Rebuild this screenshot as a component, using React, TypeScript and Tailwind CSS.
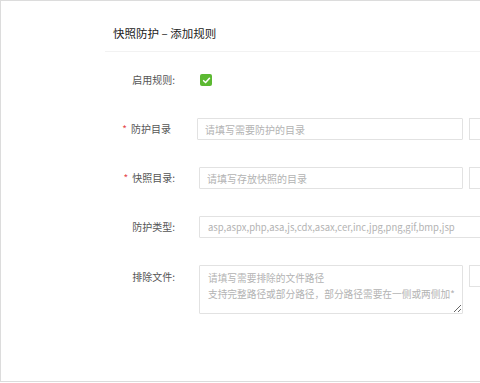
import React from 'react';

const font = "font-['Noto_Sans_CJK_SC','Noto_Sans',sans-serif]";

const Label = ({ text, required, colon = true }: { text: string; required?: boolean; colon?: boolean }) => (
  <div className={`w-[70px] shrink-0 text-right text-[10px] leading-[14px] text-[#555] ${colon ? '' : 'pr-[4px]'}`}>
    {required && <span className="mr-[4px] text-[#e5484d]">*</span>}
    {text}
    {colon && ':'}
  </div>
);

const inputCls =
  'h-[22px] border border-[#e2e2e2] bg-white px-[7px] text-[10px] text-[#555] outline-none placeholder:text-[#b3b3b3] rounded-[1px]';

const SideBox = () => <div className="ml-[6px] h-[22px] w-[60px] shrink-0 border border-[#e2e2e2] bg-white" />;

export default function App() {
  return (
    <div className={`h-[383px] w-[480px] overflow-hidden bg-white ${font}`}>
      <div className="flex h-[382px] w-[520px] border-l border-t border-b border-[#dcdcdc]">
        <div className="w-[104px] shrink-0" />
        <div className="flex-1">
          {/* header */}
          <div className="h-[51px] border-b border-[#f2f2f2] pl-2 pt-[25px]">
            <h2 className="text-[11.5px] leading-[14px] font-normal text-[#222]">快照防护 – 添加规则</h2>
          </div>

          <div className="mt-[17px] flex flex-col gap-[27px]">
            {/* enable */}
            <div className="flex h-[22px] items-center">
              <Label text="启用规则" />
              <div className="ml-[25px] flex h-[12px] w-[12px] items-center justify-center rounded-[2px] bg-[#5cb932]">
                <svg width="9" height="9" viewBox="0 0 10 10" fill="none">
                  <path d="M1.8 5.2 L4 7.3 L8.3 2.6" stroke="white" strokeWidth="1.7" strokeLinecap="round" strokeLinejoin="round" />
                </svg>
              </div>
            </div>

            <div className="flex h-[22px] items-center">
              <Label text="防护目录" required colon={false} />
              <input className={`ml-[22px] w-[266px] ${inputCls}`} placeholder="请填写需要防护的目录" />
              <SideBox />
            </div>

            <div className="flex h-[22px] items-center">
              <Label text="快照目录" required />
              <input className={`ml-[24px] w-[264px] ${inputCls}`} placeholder="请填写存放快照的目录" />
              <SideBox />
            </div>

            <div className="flex h-[22px] items-center">
              <Label text="防护类型" />
              <input
                className={`ml-[24px] w-[330px] h-[22px] rounded-[1px] border border-[#e2e2e2] bg-white px-[8px] text-[9.5px] text-[#555] outline-none placeholder:text-[#b3b3b3]`}
                placeholder="asp,aspx,php,asa,js,cdx,asax,cer,inc,jpg,png,gif,bmp,jsp"
              />
            </div>

            <div className="flex items-start">
              <div className="pt-[5px]">
                <Label text="排除文件" />
              </div>
              <textarea
                className="ml-[24px] h-[49px] w-[264px] rounded-[1px] border border-[#e2e2e2] bg-white pl-[8px] pr-[1px] pt-[4px] text-[9.7px] leading-[16px] text-[#555] outline-none placeholder:text-[#b3b3b3]"
                placeholder={'请填写需要排除的文件路径\n支持完整路径或部分路径，部分路径需要在一侧或两侧加*'}
              />
              <SideBox />
            </div>
          </div>
        </div>
      </div>
    </div>
  );
}
